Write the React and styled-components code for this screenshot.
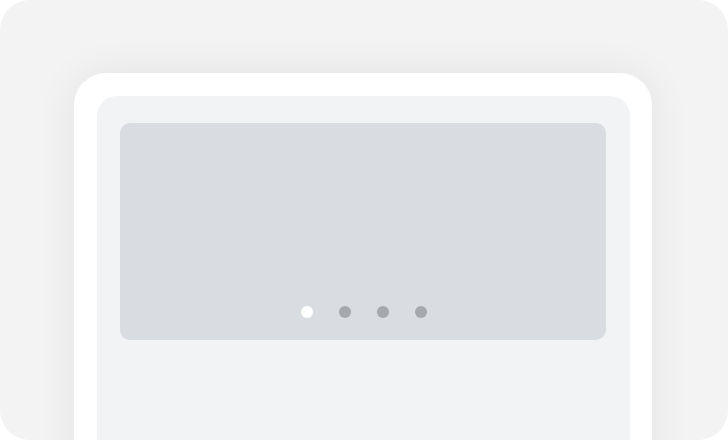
import React from 'react';
import styled, { createGlobalStyle } from 'styled-components';

const Global = createGlobalStyle`
  html, body {
    margin: 0;
    padding: 0;
    background: #ffffff;
  }
`

const Stage = styled.div`
  width: 728px;
  height: 440px;
  box-sizing: border-box;
  background: #f3f3f3;
  border-radius: 30px;
  overflow: hidden;
  padding: 73px 0 0 74px;
`

const Device = styled.div`
  width: 578px;
  height: 420px;
  box-sizing: border-box;
  background: #ffffff;
  border-radius: 32px 32px 0 0;
  padding: 23px 22px 0 23px;
  box-shadow: 0 0 40px rgba(0, 0, 0, 0.07);
`

const Screen = styled.div`
  height: 100%;
  background: #f2f3f5;
  border-radius: 20px 20px 0 0;
  padding: 27px 24px 0 23px;
  box-sizing: border-box;
`

const Carousel = styled.div`
  height: 217px;
  background: #d9dce0;
  border-radius: 10px;
  display: flex;
  align-items: flex-end;
  justify-content: center;
  padding-bottom: 22px;
  box-sizing: border-box;
`

const Dots = styled.div`
  display: flex;
  gap: 26px;
  margin-left: 1px;
`

const Dot = styled.span`
  width: 12px;
  height: 12px;
  border-radius: 50%;
  background: ${p => (p.active ? '#ffffff' : '#a5a8ad')};
`

const App = () => {
  const slides = [0, 1, 2, 3];
  const current = 0;
  return <>
    <Global />
    <Stage>
      <Device>
        <Screen>
          <Carousel>
            <Dots>
              {slides.map(i => <Dot key={i} active={i === current} />)}
            </Dots>
          </Carousel>
        </Screen>
      </Device>
    </Stage>
  </>
}

export default App;
